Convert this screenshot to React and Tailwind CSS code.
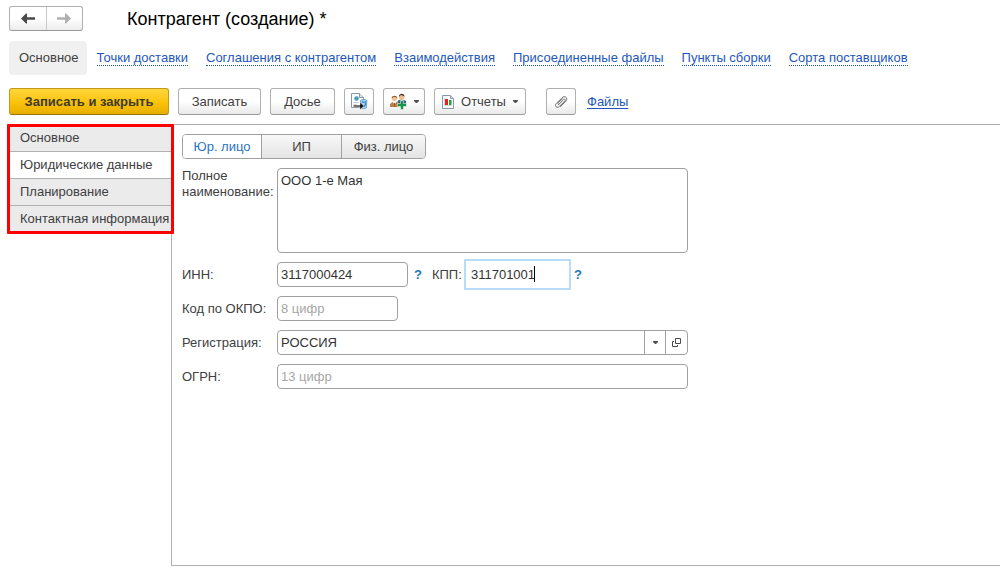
import React, { useState } from "react";

const navLinks = [
  "Точки доставки",
  "Соглашения с контрагентом",
  "Взаимодействия",
  "Присоединенные файлы",
  "Пункты сборки",
  "Сорта поставщиков",
];

const sections = ["Основное", "Юридические данные", "Планирование", "Контактная информация"];

const kinds = ["Юр. лицо", "ИП", "Физ. лицо"];

const buttonBase =
  "flex h-[27px] items-center justify-center rounded-[3px] border border-[#b0b0b0] border-b-[#9a9a9a] bg-linear-to-b from-white from-50% to-[#e9e9e9]";

const fieldBase =
  "rounded-[4px] border border-[#a0a0a0] bg-white px-[3px] text-[#333] outline-none placeholder:text-[#a6a6a6]";

function Arrow({ flip }) {
  return (
    <svg width="14" height="11" viewBox="0 0 14 11" aria-hidden="true">
      <path
        d={flip ? "M14 5.5 9 .5H8V4.300H0v2.400h8v3.800h1z" : "M0 5.500 5 .5h1V4.300h8v2.400H6v3.800H5z"}
        fill="currentColor"
      />
    </svg>
  );
}

function Caret() {
  return (
    <svg width="5" height="3" viewBox="0 0 5 3" className="shrink-0" aria-hidden="true">
      <path d="M0 0h5v1L3 3H2L0 1z" fill="#505050" />
    </svg>
  );
}

function TransferIcon() {
  return (
    <svg width="17" height="17" viewBox="0 0 17 17" aria-hidden="true">
      <path d="M.5 .5h8l4 4v10H.5z" fill="#fff" stroke="#8497a5" />
      <path d="M8.500 .5v4h4" fill="#dfe8ee" stroke="#8497a5" />
      <circle cx="5.500" cy="5.500" r="2.300" fill="#3c95d2" />
      <path d="M4 4.500l2 .5v2l-1.500-.5z" fill="#5bb85c" />
      <path d="M2.500 9.500h5M2.500 11.500h3" stroke="#c0ccd4" />
      <path d="M9.500 7.500c1.500-1.300 5-1.300 6.500 0l-.8 7.500c-1 1-3.800 1-4.900 0z" fill="#a9d3ee" stroke="#6ba6d0" />
      <path d="M11 8.700c1.300.7 2.700.7 4 0M14.500 10c.3 1.500-.2 2.800-1.500 3.500" fill="none" stroke="#2f7fc0" strokeWidth="1.200" />
      <path d="M2.500 12.200H9V9.500l4 3.500-4 3.500v-2.700H2.500z" fill="#161616" stroke="#fff" strokeWidth=".3" />
    </svg>
  );
}

function PeopleIcon() {
  return (
    <svg width="18" height="17" viewBox="0 0 18 17" className="shrink-0" aria-hidden="true">
      <path d="M7.500 10V8l2.500-1.500h3L16 8v3H8z" fill="#435f86" />
      <path d="M10.500 6.500 11.800 9l1.200-2.500z" fill="#fff" />
      <circle cx="11.700" cy="4" r="2.600" fill="#edbd8c" />
      <path d="M9 4C8.500 0 14.800-.5 14.500 4c-.8-1.700-3-1.800-3.500-2-.8.200-1.200 1-2 2z" fill="#3d3028" />
      <path d="M0 14v-3l2.500-2h4L9 11v3z" fill="#b88445" />
      <path d="M3 9l1.500 3L6 9z" fill="#fff" />
      <path d="M4.500 10v4" stroke="#c43b32" />
      <circle cx="4.500" cy="5.600" r="2.600" fill="#f2c494" />
      <path d="M1.700 5.800c-.5-4 5.900-4.300 5.700 0C6.600 4 5 4 3.900 3.700c-.8.300-1.300 1.200-2.200 2.100z" fill="#875020" />
      <path d="M10.500 7.500h3v3h3v3h-3v3h-3v-3h-3v-3h3z" fill="#159548" stroke="#fff" strokeWidth=".5" />
    </svg>
  );
}

function ReportIcon() {
  return (
    <svg width="12" height="14" viewBox="0 0 12 14" className="shrink-0" aria-hidden="true">
      <path d="M.5 .5h8l3 3v10H.5z" fill="#fff" stroke="#8799a8" />
      <path d="M8.500 .5v3h3" fill="#dfe8ee" stroke="#8799a8" />
      <path d="M2.500 3v7.500H10" fill="none" stroke="#d0d7dc" />
      <path d="M3 4h3v6H3z" fill="#e02424" />
      <path d="M7 5h2.500v5H7z" fill="#1ea33c" />
    </svg>
  );
}

function ClipIcon() {
  return (
    <svg width="14" height="14" viewBox="0 0 14 14" aria-hidden="true">
      <path
        d="M4.600 9.600 9.500 4.700c1.200-1.200 2.500.1 1.300 1.300l-5.500 5.500c-2.300 2.300-5.300-.6-3-3L8 2.800c3-3 6.600.7 3.700 3.600L6.500 11.600M4.600 9.600c-.9-.2-1-1-.3-1.700l4.200-4.200"
        fill="none"
        stroke="#6b6b6b"
        strokeLinecap="round"
      />
    </svg>
  );
}

function OpenIcon() {
  return (
    <svg width="9" height="9" viewBox="0 0 9 9" aria-hidden="true">
      <path d="M3.500 .5h5v5h-5z M2 3.500H.5v5h5V7" fill="none" stroke="#4a4a4a" />
    </svg>
  );
}

function Hint({ label }) {
  return (
    <button type="button" aria-label={label} className="font-bold text-[#1a78b8]">
      ?
    </button>
  );
}

export default function App() {
  const [section, setSection] = useState(1);
  const [kind, setKind] = useState(0);

  return (
    <div className="flex min-h-screen flex-col bg-white pt-[6px] pb-2 font-['Liberation_Sans',Arial,sans-serif] text-[13px] leading-4 text-[#404040]">
      <header className="flex h-[25px] items-center pl-[9px]">
        <div className="flex h-[25px] w-[74px] rounded-[3px] border border-[#b0b0b0] border-b-[#9a9a9a] bg-linear-to-b from-white from-50% to-[#ececec]">
          <button type="button" aria-label="Назад" className="flex flex-1 items-center justify-center border-r border-[#c8c8c8] text-[#4a4a4a]">
            <Arrow />
          </button>
          <button type="button" aria-label="Вперед" className="flex flex-1 items-center justify-center text-[#b0b0b0]">
            <Arrow flip />
          </button>
        </div>
        <h1 className="ml-11 text-[18px] leading-6 text-black">Контрагент (создание) *</h1>
      </header>

      <nav className="mt-[10px] flex h-[34px] items-center gap-[18px] pl-[9px] whitespace-nowrap">
        <a href="#main" className="-mr-2 flex h-full items-center rounded-[4px] bg-[#f0f0f0] pr-2 pl-[10px]">
          Основное
        </a>
        {navLinks.map((text) => (
          <a key={text} href="#section" className="border-b border-dotted border-[#1f54b5] leading-[14px] text-[#2458b8]">
            {text}
          </a>
        ))}
      </nav>

      <div className="mt-[13px] flex items-center gap-[9px] pl-[9px] whitespace-nowrap">
        <button
          type="button"
          className="h-[27px] w-[160px] rounded-[3px] border border-[#c39a18] border-b-[#96770f] bg-linear-to-b from-[#ffd63a] via-[#fbc50a] to-[#e8ae00] font-bold text-[#3f3a2c]"
        >
          Записать и закрыть
        </button>
        <button type="button" className={`${buttonBase} w-[83px]`}>Записать</button>
        <button type="button" className={`${buttonBase} w-[65px]`}>Досье</button>
        <button type="button" aria-label="Перенести" className={`${buttonBase} w-[30px]`}>
          <TransferIcon />
        </button>
        <button type="button" aria-label="Добавить контакт" className={`${buttonBase} w-[42px] gap-[6px]`}>
          <PeopleIcon />
          <Caret />
        </button>
        <button type="button" className={`${buttonBase} w-[92px] gap-[7px]`}>
          <ReportIcon />
          Отчеты
          <Caret />
        </button>
        <button type="button" aria-label="Прикрепить" className={`${buttonBase} ml-[11px] w-[30px]`}>
          <ClipIcon />
        </button>
        <a href="#files" className="ml-[2px] text-[#2458b8] underline underline-offset-2">Файлы</a>
      </div>

      <div className="mt-[9px] flex flex-1 pl-[9px]">
        <div className="relative w-[162px] shrink-0 border-t border-[#b0b0b0]">
          <ul>
            {sections.map((text, i) => (
              <li key={text}>
                <button
                  type="button"
                  onClick={() => setSection(i)}
                  className={`flex h-[27px] w-full items-center border-b border-[#b0b0b0] pl-[11px] text-left whitespace-nowrap ${
                    i === section ? "bg-white" : "bg-[#ebebeb]"
                  }`}
                >
                  {text}
                </button>
              </li>
            ))}
          </ul>
          <div className="pointer-events-none absolute -top-px -right-[3px] -left-[2px] h-[110px] rounded-[1px] border-3 border-[#ff0000]" />
        </div>

        <main className="flex-1 border-t border-b border-l border-[#b0b0b0] pt-[9px] pl-[10px]">
          <div className="grid h-[25px] w-[244px] grid-cols-[79px_80px_1fr] overflow-hidden rounded-[4px] border border-[#a0a0a0]">
            {kinds.map((text, i) => (
              <button
                key={text}
                type="button"
                aria-pressed={i === kind}
                onClick={() => setKind(i)}
                className={`border-[#a0a0a0] not-last:border-r ${
                  i === kind ? "bg-white text-[#2a72c4]" : "bg-linear-to-b from-[#f8f8f8] to-[#e4e4e4]"
                }`}
              >
                {text}
              </button>
            ))}
          </div>

          <form className="mt-[9px] grid max-w-[506px] grid-cols-[95px_1fr] items-center gap-y-[9px]">
            <label htmlFor="fullname" className="self-start">
              Полное наименование:
            </label>
            <textarea id="fullname" defaultValue="ООО 1-е Мая" className={`${fieldBase} block h-[85px] w-full resize-none py-1`} />

            <label htmlFor="inn">ИНН:</label>
            <div className="flex h-[25px] items-center">
              <input id="inn" defaultValue="3117000424" className={`${fieldBase} h-[25px] w-[131px]`} />
              <span className="ml-[6px] flex">
                <Hint label="Подсказка по ИНН" />
              </span>
              <label htmlFor="kpp" className="ml-[10px] w-8">КПП:</label>
              <div className="relative">
                <input
                  id="kpp"
                  defaultValue="311701001"
                  className="block h-[31px] w-[107px] border-2 border-[#b9dcf8] bg-white px-[5px] text-[#333] outline-none"
                />
                <span className="absolute top-[7px] left-[70px] h-4 w-px bg-black" />
              </div>
              <span className="ml-[3px] flex">
                <Hint label="Подсказка по КПП" />
              </span>
            </div>

            <label htmlFor="okpo">Код по ОКПО:</label>
            <input id="okpo" placeholder="8 цифр" className={`${fieldBase} h-[25px] w-[121px]`} />

            <label htmlFor="country">Регистрация:</label>
            <div className="flex h-[25px] w-full overflow-hidden rounded-[4px] border border-[#a0a0a0]">
              <input id="country" defaultValue="РОССИЯ" className="min-w-0 flex-1 px-[3px] text-[#333] outline-none" />
              <button type="button" aria-label="Выбрать" className="flex w-[21px] items-center justify-center border-l border-[#a0a0a0]">
                <Caret />
              </button>
              <button type="button" aria-label="Открыть" className="flex w-[22px] items-center justify-center border-l border-[#a0a0a0]">
                <OpenIcon />
              </button>
            </div>

            <label htmlFor="ogrn">ОГРН:</label>
            <input id="ogrn" placeholder="13 цифр" className={`${fieldBase} h-[25px] w-full`} />
          </form>
        </main>
      </div>
    </div>
  );
}
